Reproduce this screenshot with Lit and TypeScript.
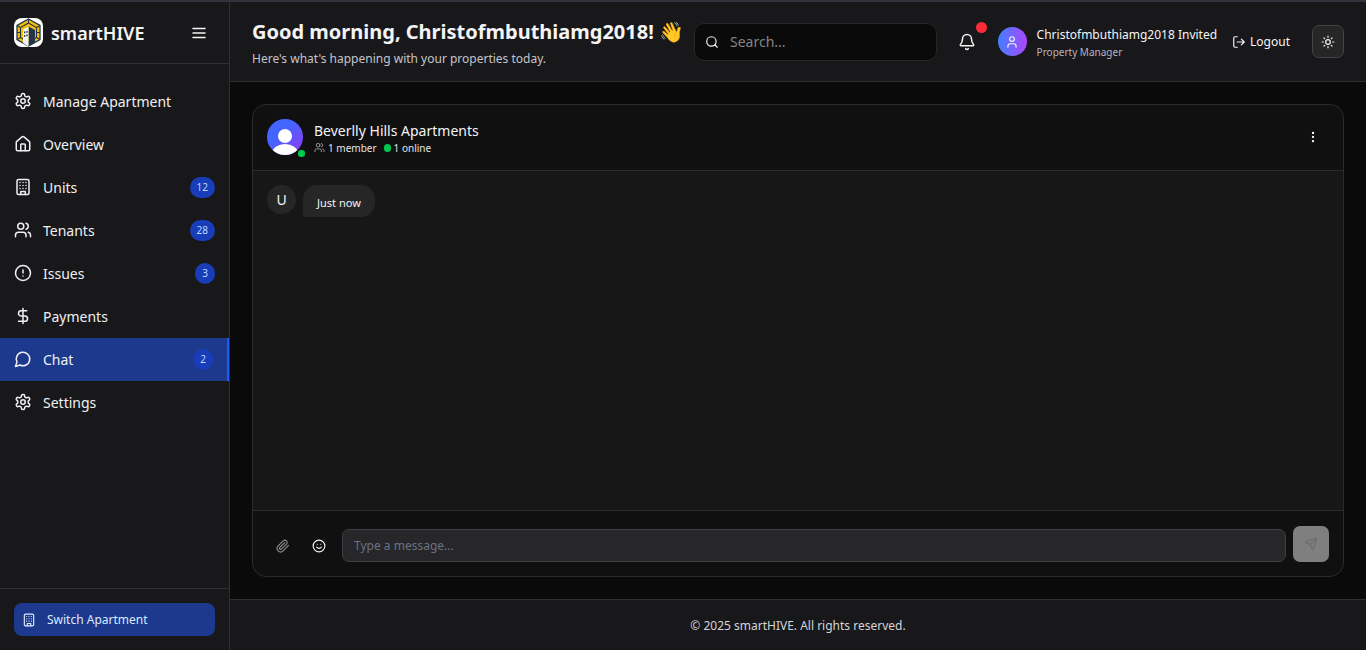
import { LitElement, html, css, svg, nothing } from 'lit';
import { customElement, property } from 'lit/decorators.js';
import { classMap } from 'lit/directives/class-map.js';

const icons: Record<string, unknown> = {
  settings: svg`<path d="M12.22 2h-.44a2 2 0 0 0-2 2v.18a2 2 0 0 1-1 1.73l-.43.25a2 2 0 0 1-2 0l-.15-.08a2 2 0 0 0-2.73.73l-.22.38a2 2 0 0 0 .73 2.73l.15.1a2 2 0 0 1 1 1.72v.51a2 2 0 0 1-1 1.74l-.15.09a2 2 0 0 0-.73 2.73l.22.38a2 2 0 0 0 2.73.73l.15-.08a2 2 0 0 1 2 0l.43.25a2 2 0 0 1 1 1.73V20a2 2 0 0 0 2 2h.44a2 2 0 0 0 2-2v-.18a2 2 0 0 1 1-1.73l.43-.25a2 2 0 0 1 2 0l.15.08a2 2 0 0 0 2.73-.73l.22-.39a2 2 0 0 0-.73-2.73l-.15-.08a2 2 0 0 1-1-1.74v-.5a2 2 0 0 1 1-1.74l.15-.09a2 2 0 0 0 .73-2.73l-.22-.38a2 2 0 0 0-2.73-.73l-.15.08a2 2 0 0 1-2 0l-.43-.25a2 2 0 0 1-1-1.73V4a2 2 0 0 0-2-2z"/><circle cx="12" cy="12" r="3"/>`,
  house: svg`<path d="M15 21v-8a1 1 0 0 0-1-1h-4a1 1 0 0 0-1 1v8"/><path d="M3 10a2 2 0 0 1 .709-1.528l7-5.999a2 2 0 0 1 2.582 0l7 5.999A2 2 0 0 1 21 10v9a2 2 0 0 1-2 2H5a2 2 0 0 1-2-2z"/>`,
  building: svg`<rect width="16" height="20" x="4" y="2" rx="2"/><path d="M9 22v-4h6v4M8 6h.01M16 6h.01M12 6h.01M12 10h.01M12 14h.01M16 10h.01M16 14h.01M8 10h.01M8 14h.01"/>`,
  users: svg`<path d="M16 21v-2a4 4 0 0 0-4-4H6a4 4 0 0 0-4 4v2"/><circle cx="9" cy="7" r="4"/><path d="M22 21v-2a4 4 0 0 0-3-3.87M16 3.13a4 4 0 0 1 0 7.75"/>`,
  alert: svg`<circle cx="12" cy="12" r="10"/><path d="M12 8v4M12 16h.01"/>`,
  dollar: svg`<path d="M12 2v20M17 5H9.5a3.5 3.5 0 0 0 0 7h5a3.5 3.5 0 0 1 0 7H6"/>`,
  chat: svg`<path d="M7.9 20A9 9 0 1 0 4 16.1L2 22Z"/>`,
  menu: svg`<path d="M4 6h16M4 12h16M4 18h16"/>`,
  search: svg`<circle cx="11" cy="11" r="8"/><path d="m21 21-4.3-4.3"/>`,
  bell: svg`<path d="M10.268 21a2 2 0 0 0 3.464 0M3.262 15.326A1 1 0 0 0 4 17h16a1 1 0 0 0 .74-1.673C19.41 13.956 18 12.499 18 8A6 6 0 0 0 6 8c0 4.499-1.411 5.956-2.738 7.326"/>`,
  user: svg`<path d="M19 21v-2a4 4 0 0 0-4-4H9a4 4 0 0 0-4 4v2"/><circle cx="12" cy="7" r="4"/>`,
  logout: svg`<path d="M9 21H5a2 2 0 0 1-2-2V5a2 2 0 0 1 2-2h4M16 17l5-5-5-5M21 12H9"/>`,
  sun: svg`<circle cx="12" cy="12" r="4"/><path d="M12 2v2M12 20v2M4.93 4.93l1.41 1.41M17.66 17.66l1.41 1.41M2 12h2M20 12h2M6.34 17.66l-1.41 1.41M19.07 4.93l-1.41 1.41"/>`,
  more: svg`<circle cx="12" cy="12" r="1"/><circle cx="12" cy="5" r="1"/><circle cx="12" cy="19" r="1"/>`,
  clip: svg`<path d="m21.44 11.05-9.19 9.19a6 6 0 0 1-8.49-8.49l8.57-8.57A4 4 0 1 1 18 8.84l-8.59 8.57a2 2 0 0 1-2.83-2.83l8.49-8.48"/>`,
  smile: svg`<circle cx="12" cy="12" r="10"/><path d="M8 14s1.5 2 4 2 4-2 4-2M9 9h.01M15 9h.01"/>`,
  send: svg`<path d="M14.536 21.686a.5.5 0 0 0 .937-.024l6.5-19a.496.496 0 0 0-.635-.635l-19 6.5a.5.5 0 0 0-.024.937l7.93 3.18a2 2 0 0 1 1.112 1.11zM21.854 2.147l-10.94 10.939"/>`,
};

@customElement('ui-icon')
class UiIcon extends LitElement {
  @property() name = '';
  static styles = css`
    :host { display: inline-flex; flex: none; width: 18px; height: 18px; }
    svg { width: 100%; height: 100%; fill: none; stroke: currentColor; stroke-width: 2; stroke-linecap: round; stroke-linejoin: round; }
  `;
  render() {
    return html`<svg viewBox="0 0 24 24" aria-hidden="true">${icons[this.name]}</svg>`;
  }
}

const resets = css`
  * { box-sizing: border-box; }
  button, input { font: inherit; color: inherit; }
  button { display: inline-flex; align-items: center; justify-content: center; padding: 0; border: 0; background: none; cursor: pointer; }
  a { color: inherit; text-decoration: none; }
  h1, h2, p, ul { margin: 0; padding: 0; font-weight: 400; list-style: none; }
`;

interface NavItem { label: string; icon: string; count?: number; active?: boolean; }

@customElement('side-bar')
class SideBar extends LitElement {
  static styles = [resets, css`
    :host { display: flex; flex-direction: column; width: 230px; flex: none; box-sizing: border-box; background: #18181b; border-right: 1px solid #303033; }
    .brand { display: flex; align-items: center; gap: 8px; height: 62px; padding: 0 21px 0 14px; border-bottom: 1px solid #303033; }
    .logo { width: 29px; height: 29px; flex: none; }
    .name { flex: 1; font-size: 18px; font-weight: 600; }
    nav { flex: 1; padding-top: 16px; }
    .item { display: flex; align-items: center; gap: 11px; height: 43px; padding: 0 14px 1px; font-size: 14px; color: #f0f0f2; }
    .item.active { background: #1c398e; border-right: 2px solid #155dfc; }
    .label { flex: 1; }
    .count { padding: 0 7px; border-radius: 11px; font-size: 10px; line-height: 21px; background: #193cb8; color: #bedbff; }
    .foot { padding: 14px; border-top: 1px solid #303033; }
    .switch { width: 100%; height: 33px; justify-content: flex-start; gap: 11px; padding: 0 8px; border-radius: 8px; background: #1c398e; color: #dbeafe; font-size: 12px; }
    .small { width: 14px; height: 14px; }
  `];
  items: NavItem[] = [
    { label: 'Manage Apartment', icon: 'settings' },
    { label: 'Overview', icon: 'house' },
    { label: 'Units', icon: 'building', count: 12 },
    { label: 'Tenants', icon: 'users', count: 28 },
    { label: 'Issues', icon: 'alert', count: 3 },
    { label: 'Payments', icon: 'dollar' },
    { label: 'Chat', icon: 'chat', count: 2, active: true },
    { label: 'Settings', icon: 'settings' },
  ];
  render() {
    return html`
      <div class="brand">
        <svg class="logo" viewBox="0 0 29 29" aria-hidden="true">
          <rect width="29" height="29" rx="8" fill="#fff"/>
          <path d="M14.5 1 26 7.500v14L14.500 28 3 21.500v-14z" fill="#f5bd0c" stroke="#22354a" stroke-width="1.300"/>
          <path d="M14.500 5 22.500 9.500v10l-8 5-8-5v-10zM3 7.500l3.500 2M26 7.500l-3.500 2M3 14.500h3.500M22.500 14.500H26M14.500 1v4M3 21.500l3.500-2M26 21.500l-3.500-2" fill="none" stroke="#22354a" stroke-width="1.100"/>
          <path d="M14.500 8.500 21 12v12.500L14.500 28.500z" fill="#22354a"/>
          <path d="M9 11.500 14.500 8.500v20L9 25z" fill="#edf1f4"/>
          <path d="M10.700 13.500v1.800M13 13v1.800M10.700 17v1.800M13 16.500v1.800" stroke="#22354a" stroke-width="1.300"/>
        </svg>
        <span class="name">smartHIVE</span>
        <button aria-label="Toggle menu"><ui-icon name="menu"></ui-icon></button>
      </div>
      <nav>${this.items.map((i) => html`
        <a href="#" class=${classMap({ item: true, active: !!i.active })}>
          <ui-icon name=${i.icon}></ui-icon><span class="label">${i.label}</span>
          ${i.count ? html`<span class="count">${i.count}</span>` : nothing}
        </a>`)}
      </nav>
      <div class="foot"><button class="switch"><ui-icon class="small" name="building"></ui-icon>Switch Apartment</button></div>
    `;
  }
}

@customElement('top-bar')
class TopBar extends LitElement {
  static styles = [resets, css`
    :host { display: flex; align-items: center; height: 80px; flex: none; box-sizing: border-box; padding: 0 22px; background: #18181b; border-bottom: 1px solid #303033; }
    .hello { flex: none; margin-right: 10px; padding-top: 2px; }
    h1 { font-size: 20px; line-height: 32px; font-weight: 700; white-space: nowrap; }
    .sub { font-size: 12px; line-height: 22px; color: #c5c5cc; }
    .search { display: flex; align-items: center; gap: 11px; flex: 1; min-width: 0; height: 38px; padding: 0 10px; border: 1px solid #262626; border-radius: 10px; background: #0a0a0a; }
    .search input { flex: 1; min-width: 0; border: 0; padding: 0; outline: 0; background: none; font-size: 14px; }
    .search input::placeholder { color: #858585; }
    .mid { width: 14px; height: 14px; }
    .bell { position: relative; flex: none; margin: 0 22px 0 21px; }
    .dot { position: absolute; left: 18px; top: -11px; width: 11px; height: 11px; border-radius: 50%; background: #fb2c36; }
    .avatar { display: flex; align-items: center; justify-content: center; flex: none; width: 29px; height: 29px; border-radius: 50%; background: linear-gradient(90deg, #4080ff, #ad46ff); }
    .who { flex: none; margin: 0 15px 0 10px; padding-top: 2px; font-size: 12px; line-height: 18px; }
    .role { font-size: 10px; line-height: 16px; color: #b5b5bd; }
    .logout { gap: 4px; flex: none; font-size: 12px; margin-right: 22px; }
    .theme { flex: none; width: 32px; height: 33px; border: 1px solid #444446; border-radius: 7px; background: #262626; }
  `];
  render() {
    return html`
      <div class="hello"><h1>Good morning, Christofmbuthiamg2018! 👋</h1><p class="sub">Here's what's happening with your properties today.</p></div>
      <label class="search"><ui-icon class="mid" name="search"></ui-icon><input type="search" aria-label="Search" placeholder="Search..."></label>
      <button class="bell" aria-label="Notifications"><ui-icon name="bell"></ui-icon><span class="dot"></span></button>
      <span class="avatar"><ui-icon class="mid" name="user"></ui-icon></span>
      <div class="who"><p>Christofmbuthiamg2018 Invited</p><p class="role">Property Manager</p></div>
      <button class="logout"><ui-icon class="mid" name="logout"></ui-icon>Logout</button>
      <button class="theme" aria-label="Toggle theme"><ui-icon class="mid" name="sun"></ui-icon></button>
    `;
  }
}

@customElement('chat-panel')
class ChatPanel extends LitElement {
  static styles = [resets, css`
    :host { display: flex; flex-direction: column; flex: 1; min-height: 0; box-sizing: border-box; border: 1px solid #2b2b2d; border-radius: 14px; background: #101010; overflow: hidden; }
    header { display: flex; align-items: center; gap: 11px; padding: 14px 23px 15px 14px; border-bottom: 1px solid #2b2b2d; }
    .group { position: relative; display: flex; }
    .group svg { width: 36px; height: 36px; }
    .status { position: absolute; right: -2px; bottom: -2px; width: 7px; height: 7px; border-radius: 3px; background: #00c950; }
    .info { flex: 1; padding-top: 1px; }
    h2 { font-size: 14px; line-height: 20px; }
    .meta { display: flex; align-items: center; gap: 3px; font-size: 10px; line-height: 14px; color: #e4e4e7; }
    .tiny { width: 11px; height: 11px; color: #a1a1a1; }
    .online { width: 7px; height: 8px; margin-left: 4px; border-radius: 4px; background: #00c950; }
    .mid { width: 14px; height: 14px; }
    .messages { display: flex; align-items: flex-start; gap: 7px; flex: 1; padding: 14px; background: #171717; }
    .initial { display: flex; align-items: center; justify-content: center; width: 29px; height: 29px; border-radius: 50%; background: #262626; font-size: 14px; }
    .bubble { padding: 4px 14px 0; height: 32px; line-height: 28px; border-radius: 14px 14px 14px 0; background: #262626; font-size: 11px; }
    form { display: flex; align-items: flex-end; gap: 7px; padding: 15px 14px 14px; border-top: 1px solid #2b2b2d; }
    .tools { display: flex; gap: 4px; }
    .tool { width: 32px; height: 33px; flex: none; }
    .faded { color: #8a8a8a; }
    .text { flex: 1; min-width: 0; height: 33px; padding: 0 11px; border: 1px solid #3f3f46; border-radius: 7px; background: #27272a; font-size: 12px; }
    .text::placeholder { color: #6a7282; }
    .send { flex: none; width: 36px; height: 36px; border-radius: 7px; background: #7f7f7f; color: #6d6d6d; }
  `];
  render() {
    return html`
      <header>
        <div class="group">
          <svg viewBox="0 0 36 36" aria-hidden="true">
            <defs><linearGradient id="g" x1="0" y1="0" x2="1" y2="1"><stop offset=".4" stop-color="#4464ff"/><stop offset="1" stop-color="#9838fa"/></linearGradient><clipPath id="c"><circle cx="18" cy="18" r="18"/></clipPath></defs>
            <circle cx="18" cy="18" r="18" fill="url(#g)"/><circle cx="18" cy="17" r="7" fill="#fff"/><ellipse cx="18" cy="34.500" rx="13" ry="9.500" fill="#fff" clip-path="url(#c)"/>
          </svg>
          <span class="status"></span>
        </div>
        <div class="info"><h2>Beverlly Hills Apartments</h2>
          <div class="meta"><ui-icon class="tiny" name="users"></ui-icon><span>1 member</span><span class="online"></span><span>1 online</span></div>
        </div>
        <button aria-label="More options"><ui-icon class="mid" name="more"></ui-icon></button>
      </header>
      <div class="messages"><span class="initial">U</span><div class="bubble">Just now</div></div>
      <form>
        <div class="tools">
          <button type="button" class="tool faded" aria-label="Attach file"><ui-icon class="mid" name="clip"></ui-icon></button>
          <button type="button" class="tool" aria-label="Insert emoji"><ui-icon class="mid" name="smile"></ui-icon></button>
        </div>
        <input class="text" aria-label="Message" placeholder="Type a message...">
        <button type="button" class="send" aria-label="Send"><ui-icon class="mid" name="send"></ui-icon></button>
      </form>
    `;
  }
}

@customElement('app-root')
class AppRoot extends LitElement {
  static styles = [resets, css`
    :host { display: flex; min-height: 100vh; box-sizing: border-box; border-top: 2px solid #32323c; background: #0a0a0a; color: #f4f4f5; font-family: "Noto Sans", sans-serif; font-size: 14px; }
    .page { display: flex; flex-direction: column; flex: 1; min-width: 0; }
    main { display: flex; flex: 1; padding: 22px; }
    footer { display: flex; align-items: center; justify-content: center; height: 51px; border-top: 1px solid #303033; background: #18181b; color: #d4d4d8; font-size: 12px; }
  `];
  render() {
    return html`
      <side-bar></side-bar>
      <div class="page"><top-bar></top-bar><main><chat-panel></chat-panel></main><footer>© 2025 smartHIVE. All rights reserved.</footer></div>
    `;
  }
}
